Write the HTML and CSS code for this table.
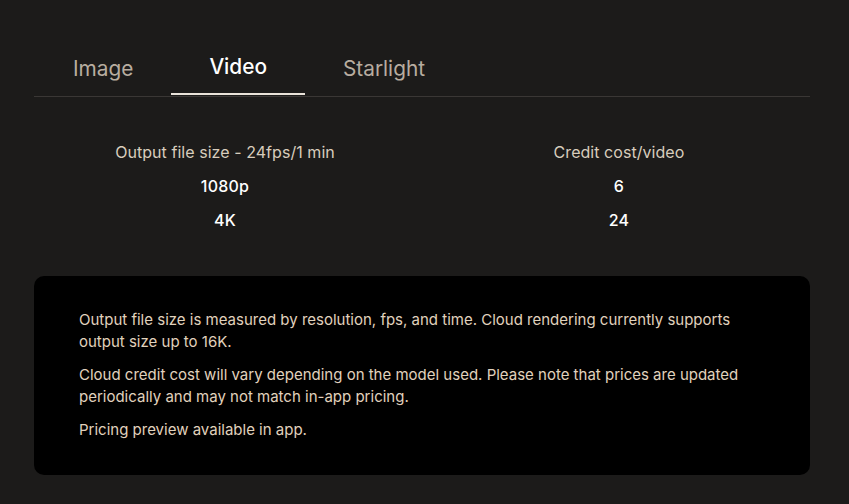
FILE: index.html
```html
<!DOCTYPE html>
<html lang="en">
<head>
<meta charset="utf-8">
<link rel="stylesheet" href="styles.css">
</head>
<body>
<main class="page">
  <nav class="tabs">
    <div class="tab">Image</div>
    <div class="tab active">Video</div>
    <div class="tab">Starlight</div>
  </nav>
  <section class="table">
    <div class="th">Output file size - 24fps/1 min</div>
    <div class="th">Credit cost/video</div>
    <div class="td">1080p</div>
    <div class="td">6</div>
    <div class="td">4K</div>
    <div class="td">24</div>
  </section>
  <section class="note">
    <p>Output file size is measured by resolution, fps, and time. Cloud rendering currently supports output size up to 16K.</p>
    <p>Cloud credit cost will vary depending on the model used. Please note that prices are updated periodically and may not match in-app pricing.</p>
    <p>Pricing preview available in app.</p>
  </section>
</main>
</body>
</html>
```

FILE: styles.css
```css
html, body {
  margin: 0;
  padding: 0;
  background: #1c1b1a;
}
body {
  font-family: Inter, "Open Sans", sans-serif;
  color: #d8cdbd;
}
.page {
  margin: 0 39px 0 34px;
  padding-top: 48px;
}
.tabs {
  display: flex;
  border-bottom: 1px solid #3a3735;
}
.tab {
  padding: 8px 38px 13px;
  font-size: 20.8px;
  line-height: 26px;
  color: #b8ada0;
  margin-left: 0;
}
.tabs .tab:first-child { margin-left: 1px; }
.tab.active {
  color: #ffffff;
  font-weight: 500;
  transform: translateY(-2px);
  border-bottom: 2px solid #e9e3da;
  margin-bottom: -1px;
}
.table {
  display: grid;
  grid-template-columns: 394px 394px;
  justify-content: center;
  padding-top: 39px;
}
.th, .td {
  text-align: center;
  font-size: 16px;
  line-height: 33px;
}
.th {
  color: #d8cdbd;
  letter-spacing: 0.05px;
}
.td {
  color: #ffffff;
  font-weight: 500;
  line-height: 34px;
  letter-spacing: 0.2px;
}
.note {
  margin-top: 39px;
  background: #000;
  border-radius: 10px;
  padding: 33px 60px 34px 45px;
  color: #e0d2bd;
  font-size: 15px;
  line-height: 22px;
}
.note p {
  margin: 0 0 11px;
}
.note p:last-child {
  margin-bottom: 0;
}
```
